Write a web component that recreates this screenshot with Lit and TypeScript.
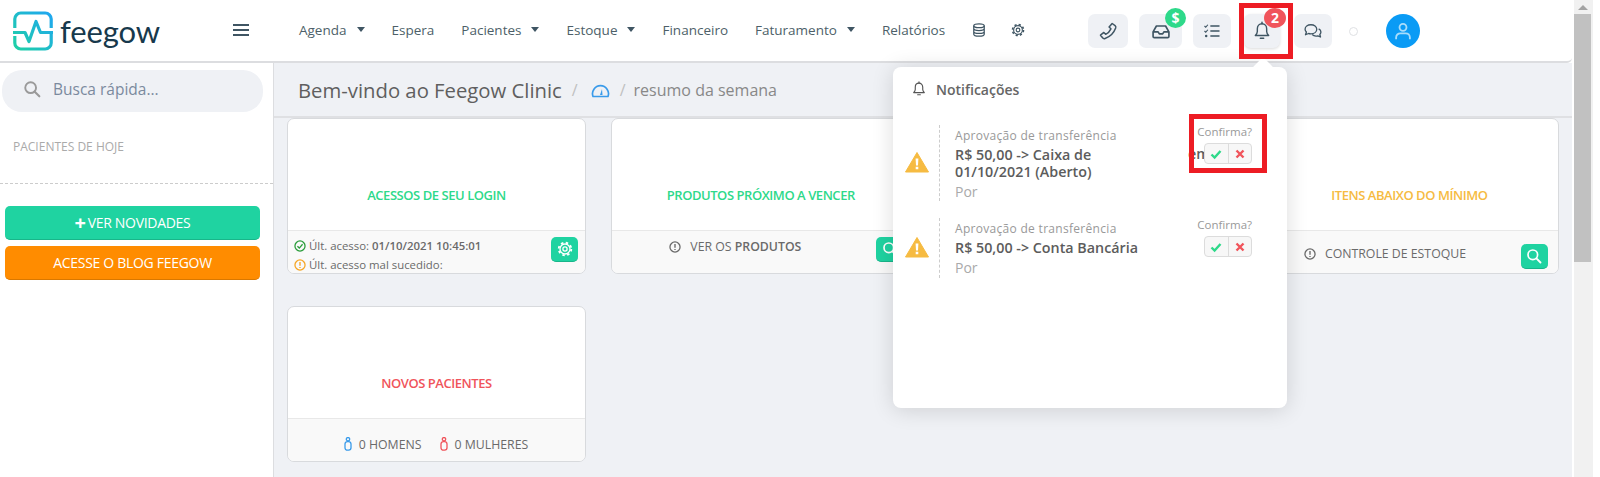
import { LitElement, html, css, svg } from 'lit';
import { customElement, property } from 'lit/decorators.js';

const bell = svg`<path d="M12 3.2c-3.4 0-5.6 2.6-5.6 6v3.4c0 2-1 3.3-2.4 4.8h16c-1.4-1.5-2.4-2.8-2.4-4.8V9.2c0-3.4-2.2-6-5.6-6z" fill="none" stroke="currentColor" stroke-width="1.7" stroke-linejoin="round"/><path d="M12 1.4v1.8M10 20.6h4" fill="none" stroke="currentColor" stroke-width="1.8" stroke-linecap="round"/>`;

const warn = html`<svg class="warn" viewBox="0 0 24 21"><path d="M12 1 23.5 20.5H.5z" fill="#f6bb42" stroke="#f6bb42" stroke-width="1" stroke-linejoin="round"/><path d="M10.6 7h2.800l-.4 7h-2zM10.700 15.200h2.600v2.600h-2.600z" fill="#fff"/></svg>`;

const search = html`<svg viewBox="0 0 16 16" width="16" height="16"><circle cx="6.800" cy="6.800" r="4.800" fill="none" stroke="currentColor" stroke-width="1.700"/><path d="M10.400 10.400 14.500 14.500" stroke="currentColor" stroke-width="1.900" stroke-linecap="round"/></svg>`;

// cog: dashed outer ring makes the teeth
const gear = html`<svg viewBox="0 0 16 16" width="16" height="16"><circle cx="8" cy="8" r="5" fill="none" stroke="currentColor" stroke-width="1.300"/><circle cx="8" cy="8" r="6.300" fill="none" stroke="currentColor" stroke-width="1.800" stroke-dasharray="2.470 2.480"/><circle cx="8" cy="8" r="2.100" fill="none" stroke="currentColor" stroke-width="1.300"/></svg>`;

const info = html`<svg viewBox="0 0 14 14" width="12" height="12"><circle cx="7" cy="7" r="5.900" fill="none" stroke="currentColor" stroke-width="1.500"/><path d="M7 3.600v4.200M7 9.400v1.100" stroke="currentColor" stroke-width="1.600"/></svg>`;

const okIcon = html`<svg viewBox="0 0 14 14" width="12" height="12"><circle cx="7" cy="7" r="5.900" fill="none" stroke="currentColor" stroke-width="1.500"/><path d="M4 7.200 6.200 9.400 10 5" fill="none" stroke="currentColor" stroke-width="1.500"/></svg>`;

function person(color: string) {
  return html`<svg viewBox="0 0 8 14"><circle cx="4" cy="2.200" r="1.700" fill="none" stroke=${color} stroke-width="1.300"/><rect x="1" y="4.600" width="6" height="8.600" rx="2.400" fill="none" stroke=${color} stroke-width="1.300"/></svg>`;
}

@customElement('dash-card')
export class DashCard extends LitElement {
  @property() heading = '';
  @property() tone = 'green';

  static styles = css`
    :host {
      display: flex;
      flex-direction: column;
      height: 156px;
      box-sizing: border-box;
      background: #fff;
      border: 1px solid #d8dadd;
      border-radius: 7px;
      overflow: hidden;
      font-family: 'Open Sans', sans-serif;
    }
    .body {
      flex: 1;
      display: flex;
      align-items: flex-end;
      justify-content: center;
      padding-bottom: 27px;
      font-size: 13px;
      line-height: 16px;
      font-weight: 600;
      letter-spacing: -0.45px;
    }
    .green { color: #2ed98a; }
    .amber { color: #f6bb42; }
    .red { color: #f0545b; }
    .foot {
      height: 43px;
      box-sizing: border-box;
      background: #f9f9f9;
      border-top: 1px solid #e8e8e8;
      font-size: 12.3px;
      color: #6a6a6a;
    }
  `;

  render() {
    return html`
      <div class="body ${this.tone}">${this.heading}</div>
      <div class="foot"><slot></slot></div>
    `;
  }
}

@customElement('app-root')
export class AppRoot extends LitElement {
  static styles = css`
    :host {
      display: block;
      height: 477px;
      position: relative;
      overflow: hidden;
      background: #fff;
      font-family: 'Open Sans', sans-serif;
    }
    .frame { display: flex; height: 477px; }
    .app { width: 1572px; display: flex; flex-direction: column; }

    /* header */
    .top {
      height: 63px;
      flex: none;
      box-sizing: border-box;
      display: flex;
      align-items: center;
      background: #fff;
      border-bottom: 2px solid #dcdde0;
      border-bottom-right-radius: 5px;
    }
    .logo { width: 233px; box-sizing: border-box; padding-left: 13px; display: flex; align-items: center; gap: 7px; }
    .logo svg { width: 40px; height: 40px; flex: none; }
    .logo span { font-family: 'Lato', sans-serif; font-size: 31px; letter-spacing: -0.1px; color: #17394c; line-height: 40px; }
    .burger { width: 16px; height: 12px; margin-top: -1px; border-top: 2px solid #3f5563; border-bottom: 2px solid #3f5563; position: relative; box-sizing: border-box; }
    .burger::after { content: ''; position: absolute; left: 0; right: 0; top: 3px; height: 2px; background: #3f5563; }
    .nav { width: 789px; margin: -2px 0 0 50px; display: flex; align-items: center; gap: 27px; font-size: 13.5px; color: #4d5f69; }
    .nav a { display: flex; align-items: center; gap: 10px; }
    .caret { width: 0; height: 0; border: 4.5px solid transparent; border-top: 5px solid #3f5563; border-bottom: 0; }
    .nav svg { width: 14px; height: 14px; display: block; color: #3f5563; }
    .nav svg + svg { margin-left: -2px; }
    .actions { display: flex; align-items: center; }
    .act { height: 34px; border-radius: 7px; background: #eff1f5; color: #3f5563; display: flex; align-items: center; justify-content: center; position: relative; }
    .act svg { width: 20px; height: 20px; }
    .phone { width: 40px; margin-right: 11px; }
    .inbox { width: 43px; margin-right: 11px; }
    .tasks { width: 38px; margin-right: 13px; }
    .bell { width: 36px; margin-right: 14px; box-shadow: 0 1px 3px rgba(0, 0, 0, 0.14); }
    .chat { width: 38px; margin-right: 17px; }
    .badge { position: absolute; top: -6px; right: -4px; width: 21px; height: 20px; border-radius: 50%; color: #fff; font-size: 14px; font-weight: 700; line-height: 20px; text-align: center; }
    .badge.money { background: #2ed98a; }
    .badge.count { background: #f0545b; top: -6px; right: -6px; width: 22px; }
    .dot { width: 7px; height: 7px; border: 1px solid #dfe1e4; border-radius: 50%; margin-top: 2px; margin-right: 28px; }
    .avatar { width: 34px; height: 34px; border-radius: 50%; background: #0a9bf5; display: flex; align-items: center; justify-content: center; }
    .avatar svg { width: 22px; height: 22px; }

    /* page */
    .rest { flex: 1; display: flex; min-height: 0; }
    .side { width: 274px; box-sizing: border-box; flex: none; background: #fff; border-right: 1px solid #dcdde0; padding-top: 7px; }
    .find { margin: 0 10px 0 2px; height: 42px; border-radius: 20px; background: #eff1f5; display: flex; align-items: center; gap: 12px; padding: 0 0 4px 21px; box-sizing: border-box; font-size: 15.5px; color: #7b8a9e; }
    .find svg { width: 18px; height: 18px; color: #9a9a9a; }
    .today { margin: 27px 0 0 13px; font-size: 12px; line-height: 16px; color: #aaa; height: 44px; }
    .rule { border-top: 1px dashed #ccc; }
    .btn { margin: 0 13px 0 5px; height: 34px; border-radius: 5px; color: #fff; font-size: 14px; letter-spacing: -0.3px; display: flex; align-items: center; justify-content: center; box-sizing: border-box; }
    .btn.news { margin-top: 22px; background: #1fd3a1; border-bottom: 1px solid #19b58a; }
    .btn.blog { margin-top: 6px; background: #ff8c00; border-bottom: 1px solid #d97800; }
    .btn b { font-size: 20px; font-weight: 700; line-height: 1; margin-right: 2px; }
    .main { flex: 1; min-width: 0; background: #eff1f5; display: flex; flex-direction: column; }
    .crumbs { height: 55px; flex: none; box-sizing: border-box; border-bottom: 2px solid #dfe0e3; display: flex; align-items: center; padding-left: 24px; color: #5f5f5f; }
    .crumbs h1 { margin: 0; font-size: 20.3px; font-weight: 400; }
    .crumbs i { font-style: normal; color: #c0c0c0; font-size: 16px; margin: 0 10px; }
    .crumbs svg { width: 19px; height: 16px; color: #3a9bea; margin-left: 3px; }
    .crumbs span { font-size: 16px; color: #888; margin-left: -2px; }
    .grid { display: grid; grid-template-columns: repeat(4, 299px); column-gap: 25.3px; row-gap: 32px; padding-left: 13px; }
    .foot-row { height: 100%; display: flex; align-items: flex-start; }
    .login { padding: 6px 7px 0 6px; justify-content: space-between; }
    .login p { margin: 0; font-size: 11.4px; line-height: 18.500px; white-space: nowrap; display: flex; align-items: center; gap: 3px; }
    .login p span { display: flex; }
    .login b, .txt b { font-weight: 600; }
    .ok { color: #2a9d3a; }
    .warn-ic { color: #f6a623; }
    .sq { width: 27px; height: 25px; border-radius: 5px; background: #1fd3a1; border-bottom: 1px solid #19b58a; color: #fff; display: flex; align-items: center; justify-content: center; flex: none; box-sizing: border-box; }
    .txt { display: flex; align-items: center; gap: 9px; height: 17px; margin-top: 1px; }
    .prod { padding: 6px 0 0 57px; box-sizing: border-box; }
    .prod .txt { width: 207px; }
    .stock { padding: 13px 10px 0 43px; box-sizing: border-box; justify-content: space-between; }
    .gender { justify-content: center; align-items: center; gap: 18px; padding: 8px 1px 0 0; box-sizing: border-box; }
    .gender span { display: flex; align-items: center; gap: 7px; }
    .gender svg { width: 8px; height: 14px; }

    /* fake scrollbar of the window */
    .scroll { width: 19px; margin-left: 2px; flex: none; background: #f1f1f1; position: relative; }
    .scroll::before { content: ''; position: absolute; left: 4px; top: 5px; width: 0; height: 0; border: 5px solid transparent; border-bottom: 5px solid #a3a3a3; border-top: 0; }
    .thumb { position: absolute; left: 0; top: 14px; width: 17px; height: 248px; background: #c1c1c1; }

    /* notifications popover */
    .pop { position: absolute; left: 893px; top: 67px; width: 394px; height: 341px; box-sizing: border-box; background: #fff; border-radius: 8px; box-shadow: 0 2px 22px rgba(0, 0, 0, 0.14); padding: 12px 0 0 18px; color: #5a5a5a; }
    .pop::before { content: ''; position: absolute; left: 363px; top: -7px; width: 14px; height: 14px; background: #fff; transform: rotate(45deg); }
    .pop-head { display: flex; align-items: center; gap: 9px; font-size: 14px; font-weight: 600; color: #666; height: 20px; position: relative; }
    .pop-head svg { width: 16px; height: 16px; color: #555; }
    .item { display: flex; align-items: center; position: relative; }
    .item.one { height: 76px; margin: 26px 0 0 -6px; }
    .item.two { height: 60px; margin: 17px 0 0 -6px; }
    .warn { width: 24px; height: 22px; flex: none; margin-top: -2px; }
    .txtbox { margin-left: 10px; border-left: 1px dashed #ccc; padding-left: 15px; height: 100%; box-sizing: border-box; width: 170px; }
    .item.two .txtbox { width: 232px; }
    .lbl { font-size: 12px; line-height: 16px; letter-spacing: 0.3px; color: #999; margin-top: 3px; white-space: nowrap; }
    .ttl { font-size: 14.3px; line-height: 17px; font-weight: 600; color: #5c5c5c; margin-top: 2px; white-space: nowrap; }
    .by { font-size: 14px; line-height: 20px; color: #aaa; margin-top: 2px; }
    .confirm { position: absolute; left: 283px; top: -1px; width: 64px; text-align: right; font-size: 11.5px; line-height: 16px; color: #999; white-space: nowrap; }
    .cut { position: absolute; left: 283px; top: 21px; font-size: 14.3px; font-weight: 600; color: #5c5c5c; line-height: 16px; }
    .pair { position: absolute; left: 299px; top: 18px; width: 48px; height: 21px; box-sizing: border-box; display: flex; border: 1px solid #dcdcdc; border-radius: 4px; background: #f7f7f7; overflow: hidden; }
    .pair div { flex: 1; display: flex; align-items: center; justify-content: center; }
    .pair div + div { border-left: 1px solid #dcdcdc; }
    .pair svg { width: 12px; height: 12px; }

    /* red marks drawn on the screenshot */
    .mark { position: absolute; border: 5px solid #ed1c24; box-sizing: border-box; }
    .mark.m1 { left: 1239px; top: 3px; width: 54px; height: 56px; }
    .mark.m2 { left: 1189px; top: 114px; width: 78px; height: 59px; }
  `;

  private notif(cls: string, lines: unknown) {
    return html`<div class="item ${cls}">
      ${warn}
      <div class="txtbox">
        <div class="lbl">Aprovação de transferência</div>
        <div class="ttl">${lines}</div>
        <div class="by">Por</div>
      </div>
      ${cls === 'one' ? html`<div class="cut">em</div>` : ''}
      <div class="confirm">Confirma?</div>
      <div class="pair">
        <div><svg viewBox="0 0 12 12"><path d="M1.500 6.500 4.600 9.600 10.500 3" fill="none" stroke="#2ed98a" stroke-width="2.400"/></svg></div>
        <div><svg viewBox="0 0 12 12"><path d="M2.500 2.500l7 7M9.500 2.500l-7 7" fill="none" stroke="#f0545b" stroke-width="2.400"/></svg></div>
      </div>
    </div>`;
  }

  render() {
    return html`
      <div class="frame">
        <div class="app">
          <header class="top">
            <div class="logo">
              <svg viewBox="0 0 40 40">
                <defs><linearGradient id="lg" gradientUnits="userSpaceOnUse" x1="40" y1="0" x2="0" y2="40"><stop offset="0" stop-color="#1fa4f5"/><stop offset="1" stop-color="#1fd3a1"/></linearGradient></defs>
                <path d="M1.800 17V8a6 6 0 0 1 6-6h24.400a6 6 0 0 1 6 6v9M1.800 25v7a6 6 0 0 0 6 6h24.400a6 6 0 0 0 6-6v-9M0 21.500h12l4 9 7-20 4.500 11H40" fill="none" stroke="url(#lg)" stroke-width="3.200" stroke-linejoin="round"/>
              </svg>
              <span>feegow</span>
            </div>
            <div class="burger"></div>
            <nav class="nav">
              <a>Agenda <span class="caret"></span></a>
              <a>Espera</a>
              <a>Pacientes <span class="caret"></span></a>
              <a>Estoque <span class="caret"></span></a>
              <a>Financeiro</a>
              <a>Faturamento <span class="caret"></span></a>
              <a>Relatórios</a>
              <svg viewBox="0 0 16 16"><ellipse cx="8" cy="3.200" rx="6" ry="2.200" fill="none" stroke="currentColor" stroke-width="1.400"/><path d="M2 3.200v9.600c0 1.200 2.700 2.200 6 2.200s6-1 6-2.200V3.200M2 6.400c0 1.200 2.700 2.200 6 2.200s6-1 6-2.200M2 9.600c0 1.200 2.700 2.200 6 2.200s6-1 6-2.200" fill="none" stroke="currentColor" stroke-width="1.400"/></svg>
              ${gear}
            </nav>
            <div class="actions">
              <div class="act phone"><svg viewBox="0 0 24 24"><path d="M17 3 20.500 5.500c.9.700 1.100 1.800.7 3C19.200 14 14.500 19 8.500 21c-1.200.4-2.300.1-3-.8L3 17l4-3.300 2.200 2.300c2.800-1.300 5-3.800 6.300-6.600L13.300 7.200z" fill="none" stroke="currentColor" stroke-width="1.800" stroke-linejoin="round"/></svg></div>
              <div class="act inbox"><svg viewBox="0 0 24 24"><path d="M2.500 13 6.500 6h11l4 7v5.500a1.500 1.500 0 0 1-1.500 1.500H4a1.500 1.500 0 0 1-1.500-1.500zM2.500 13h6l1.500 2.500h4l1.500-2.500h6" fill="none" stroke="currentColor" stroke-width="2" stroke-linejoin="round"/></svg><span class="badge money">$</span></div>
              <div class="act tasks"><svg viewBox="0 0 24 24"><path d="M3 6l1.500 1.500L7 4.500M3 12l1.500 1.500L7 10.500" fill="none" stroke="currentColor" stroke-width="1.400"/><circle cx="5" cy="18" r="1.500" fill="currentColor"/><path d="M10 6h11M10 12h11M10 18h11" stroke="currentColor" stroke-width="1.700"/></svg></div>
              <div class="act bell"><svg viewBox="0 0 24 24">${bell}</svg><span class="badge count">2</span></div>
              <div class="act chat"><svg viewBox="0 0 24 24"><path d="M9.500 4.500c-4 0-7 2.300-7 5.300 0 1.300.6 2.500 1.600 3.400L3 16.500l3.700-1.500c.9.300 1.800.4 2.800.4 4 0 7-2.400 7-5.500s-3-5.400-7-5.400z" fill="none" stroke="currentColor" stroke-width="1.600" stroke-linejoin="round"/><path d="M18.800 9.500c1.700.8 2.700 2.200 2.700 3.800 0 1.100-.5 2.100-1.300 2.900l.8 3-3.200-1.400c-2.400.7-5.200 0-6.800-1.600" fill="none" stroke="currentColor" stroke-width="1.600" stroke-linejoin="round"/></svg></div>
              <div class="dot"></div>
              <div class="avatar"><svg viewBox="0 0 24 24"><circle cx="12" cy="8" r="3.800" fill="none" stroke="#a9ddfb" stroke-width="2"/><path d="M4.500 21v-2a4.500 4.500 0 0 1 4.500-4.500h6a4.500 4.500 0 0 1 4.500 4.500v2" fill="none" stroke="#a9ddfb" stroke-width="2"/></svg></div>
            </div>
          </header>
          <div class="rest">
            <aside class="side">
              <div class="find">${search}<span>Busca rápida...</span></div>
              <div class="today">PACIENTES DE HOJE</div>
              <div class="rule"></div>
              <div class="btn news"><b>+</b> VER NOVIDADES</div>
              <div class="btn blog">ACESSE O BLOG FEEGOW</div>
            </aside>
            <main class="main">
              <div class="crumbs">
                <h1>Bem-vindo ao Feegow Clinic</h1>
                <i>/</i>
                <svg viewBox="0 0 19 16"><path d="M2 14.500a8 8 0 1 1 15 0z" fill="none" stroke="currentColor" stroke-width="1.700" stroke-linejoin="round"/><path d="M9 13l2-6 .5 6z" fill="currentColor"/></svg>
                <i>/</i>
                <span>resumo da semana</span>
              </div>
              <div class="grid">
                <dash-card heading="ACESSOS DE SEU LOGIN" tone="green">
                  <div class="foot-row login">
                    <div>
                      <p><span class="ok">${okIcon}</span> Últ. acesso: <b>01/10/2021 10:45:01</b></p>
                      <p><span class="warn-ic">${info}</span> Últ. acesso mal sucedido:</p>
                    </div>
                    <div class="sq">${gear}</div>
                  </div>
                </dash-card>
                <dash-card heading="PRODUTOS PRÓXIMO A VENCER" tone="green">
                  <div class="foot-row prod">
                    <div class="txt">${info}<span>VER OS <b>PRODUTOS</b></span></div>
                    <div class="sq">${search}</div>
                  </div>
                </dash-card>
                <dash-card tone="red"><div class="foot-row"></div></dash-card>
                <dash-card heading="ITENS ABAIXO DO MÍNIMO" tone="amber">
                  <div class="foot-row stock">
                    <div class="txt">${info}<span>CONTROLE DE ESTOQUE</span></div>
                    <div class="sq">${search}</div>
                  </div>
                </dash-card>
                <dash-card heading="NOVOS PACIENTES" tone="red">
                  <div class="foot-row gender">
                    <span>${person('#3a9bea')} 0 HOMENS</span>
                    <span>${person('#f0545b')} 0 MULHERES</span>
                  </div>
                </dash-card>
              </div>
            </main>
          </div>
        </div>
        <div class="scroll"><div class="thumb"></div></div>
      </div>

      <section class="pop">
        <div class="pop-head"><svg viewBox="0 0 24 24">${bell}</svg>Notificações</div>
        ${this.notif('one', html`R$ 50,00 -> Caixa de<br />01/10/2021 (Aberto)`)}
        ${this.notif('two', 'R$ 50,00 -> Conta Bancária')}
      </section>

      <div class="mark m1"></div>
      <div class="mark m2"></div>
    `;
  }
}
